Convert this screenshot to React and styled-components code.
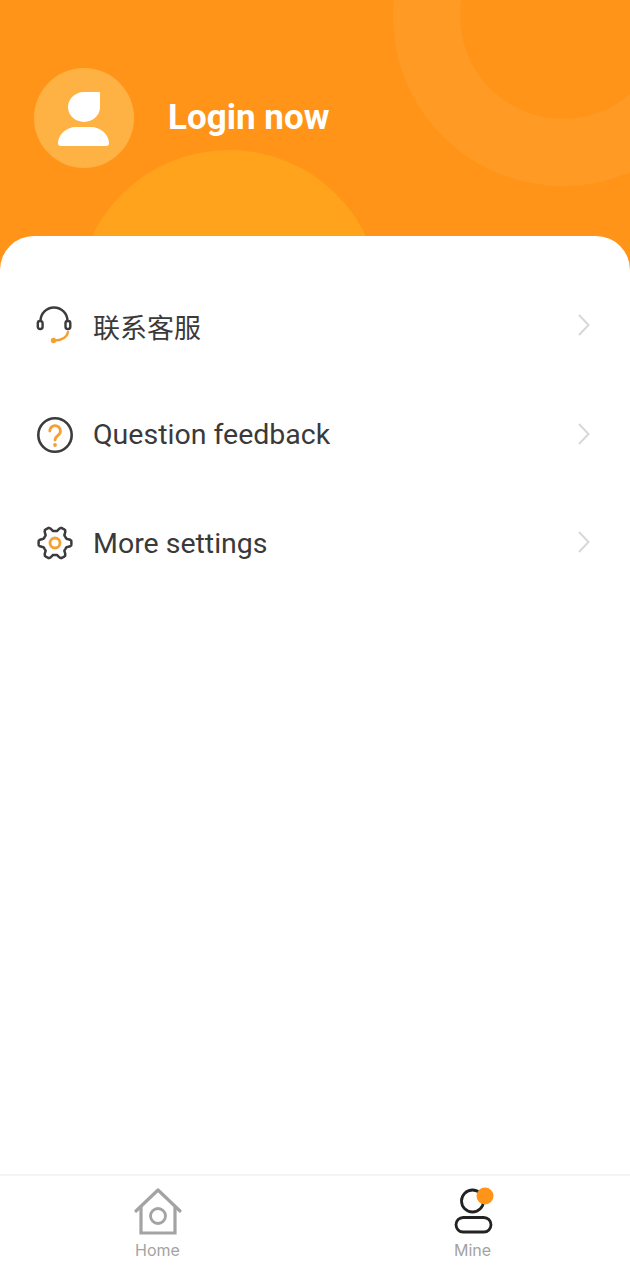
import React from 'react'
import styled, { createGlobalStyle } from 'styled-components'

const GlobalStyle = createGlobalStyle`
  html, body { margin: 0; padding: 0; background: #fff; }
  body { font-family: Roboto, "Noto Sans CJK SC", sans-serif; }
  * { box-sizing: border-box; }
`

const Page = styled.div`
  width: 630px;
  height: 1280px;
  display: flex;
  flex-direction: column;
  overflow: hidden;
  background: #fff;
`

const Header = styled.header`
  position: relative;
  height: 270px;
  flex: none;
  background: #ff9418;
  overflow: hidden;
  display: flex;
  align-items: flex-start;
  padding: 68px 34px 0;
`

const Ring = styled.div`
  position: absolute;
  left: 393px;
  top: -154px;
  width: 340px;
  height: 340px;
  border-radius: 50%;
  border: 67px solid #ff9b25;
`

const Hill = styled.div`
  position: absolute;
  left: 77px;
  top: 150px;
  width: 304px;
  height: 304px;
  border-radius: 50%;
  background: #ffa31c;
`

const Avatar = styled.div`
  position: relative;
  width: 100px;
  height: 100px;
  flex: none;
  border-radius: 50%;
  background: #ffb244;
  display: flex;
  align-items: center;
  justify-content: center;
`

const LoginText = styled.div`
  position: relative;
  margin-left: 34px;
  height: 100px;
  line-height: 100px;
  font-size: 35px;
  font-weight: 700;
  color: #fff;
`

const Card = styled.main`
  position: relative;
  flex: 1;
  margin-top: -34px;
  background: #fff;
  border-radius: 34px 34px 0 0;
  padding-top: 36px;
`

const Row = styled.div`
  height: 108.5px;
  display: flex;
  align-items: center;
  padding: 0 38px 0 35px;
`

const RowIcon = styled.svg`
  width: 40px;
  height: 40px;
  flex: none;
`

const RowLabel = styled.span`
  flex: 1;
  margin-left: 18px;
  font-size: 28.5px;
  color: #3a3a3a;
  font-family: Roboto, "Noto Sans CJK SC", sans-serif;
  &[lang='zh'] {
    font-size: 27px;
  }
`

const Chevron = styled.svg`
  width: 16px;
  height: 26px;
  flex: none;
`

const TabBar = styled.nav`
  flex: none;
  height: 106px;
  border-top: 2px solid #f4f4f4;
  display: grid;
  grid-template-columns: 1fr 1fr;
  background: #fff;
`

const Tab = styled.div`
  display: flex;
  flex-direction: column;
  align-items: center;
  padding-top: 11px;
`

const TabIcon = styled.svg`
  width: 50px;
  height: 50px;
  display: block;
`

const TabLabel = styled.span`
  margin-top: 4px;
  font-family: Inter, Roboto, sans-serif;
  font-size: 16px;
  line-height: 18px;
  color: #a3a3a3;
`

const ORANGE = '#f5a033'
const DARK = '#3c3c3c'

// six toothed outline, teeth on the left and right, notches top and bottom
function gearPath() {
  const pts = []
  for (let deg = 0; deg < 360; deg += 4) {
    const a = (deg * Math.PI) / 180
    const tooth = Math.max(-1, Math.min(1, Math.cos(6 * a) * 1.8))
    const r = 14.2 + 2.2 * tooth
    pts.push(`${(20 + r * Math.cos(a)).toFixed(2)} ${(20 + r * Math.sin(a)).toFixed(2)}`)
  }
  return `M${pts.join('L')}Z`
}

function HeadsetIcon() {
  return (
    <RowIcon viewBox="0 0 40 40" fill="none">
      <path d="M5.500 15a13.500 13.500 0 0 1 27 0" stroke={DARK} strokeWidth="2.400" />
      <rect x="2.800" y="15" width="4.800" height="8" rx="2.200" stroke={DARK} strokeWidth="2.400" />
      <rect x="30.500" y="15" width="4.800" height="8" rx="2.200" stroke={DARK} strokeWidth="2.400" />
      <path d="M33 26c-1 5-6 8.500-14 8.500" stroke={ORANGE} strokeWidth="2.400" strokeLinecap="round" />
      <circle cx="18.500" cy="34.500" r="2.700" fill={ORANGE} />
    </RowIcon>
  )
}

function QuestionIcon() {
  return (
    <RowIcon viewBox="0 0 40 40" fill="none">
      <circle cx="20" cy="20" r="16.700" stroke={DARK} strokeWidth="2.600" />
      <path d="M14.800 16a5.300 5.300 0 1 1 8.500 4.200c-2.300 1.700-3.300 2.600-3.300 4.800" stroke={ORANGE} strokeWidth="2.800" strokeLinecap="round" />
      <circle cx="20" cy="30" r="1.900" fill={ORANGE} />
    </RowIcon>
  )
}

function GearIcon() {
  return (
    <RowIcon viewBox="0 0 40 40" fill="none">
      <path d={gearPath()} stroke={DARK} strokeWidth="2.500" strokeLinejoin="round" />
      <circle cx="20" cy="20" r="5" stroke={ORANGE} strokeWidth="2.800" />
    </RowIcon>
  )
}

const rows = [
  { label: '联系客服', lang: 'zh', Icon: HeadsetIcon },
  { label: 'Question feedback', lang: 'en', Icon: QuestionIcon },
  { label: 'More settings', lang: 'en', Icon: GearIcon },
]

export default function App() {
  return (
    <Page>
      <GlobalStyle />
      <Header>
        <Ring />
        <Hill />
        <Avatar>
          <svg width="54" height="60" viewBox="0 0 54 60">
            <path d="M27 4h15c.6 0 1 .4 1 1v14a16 15 0 0 1-32 0C11 11 18 4 27 4z" fill="#fff" />
            <path d="M19 39h15c10 0 18 8 18 16 0 2-1 3-3 3H4c-2 0-3-1-3-3 0-8 8-16 18-16z" fill="#fff" />
          </svg>
        </Avatar>
        <LoginText>Login now</LoginText>
      </Header>
      <Card>
        {rows.map(({ label, lang, Icon }) => (
          <Row key={label}>
            <Icon />
            <RowLabel lang={lang}>{label}</RowLabel>
            <Chevron viewBox="0 0 16 26" fill="none">
              <path d="M3 2l9.500 10L3 22" stroke="#d8d8d8" strokeWidth="2" />
            </Chevron>
          </Row>
        ))}
      </Card>
      <TabBar>
        <Tab>
          <TabIcon viewBox="0 0 50 50" fill="none">
            <path d="M3 24L25 3l22 21" stroke="#a3a3a3" strokeWidth="3.200" strokeLinejoin="round" strokeLinecap="round" />
            <path d="M8 20v26h34V20" stroke="#a3a3a3" strokeWidth="3.200" />
            <circle cx="25" cy="29" r="7.500" stroke="#a3a3a3" strokeWidth="2.800" />
          </TabIcon>
          <TabLabel>Home</TabLabel>
        </Tab>
        <Tab>
          <TabIcon viewBox="0 0 50 50" fill="none">
            <circle cx="24.500" cy="14" r="11" stroke="#222" strokeWidth="2.800" />
            <rect x="8" y="30.500" width="35" height="14.500" rx="7.200" stroke="#222" strokeWidth="2.800" />
            <circle cx="37" cy="9" r="8.500" fill="#ff9418" />
          </TabIcon>
          <TabLabel>Mine</TabLabel>
        </Tab>
      </TabBar>
    </Page>
  )
}
